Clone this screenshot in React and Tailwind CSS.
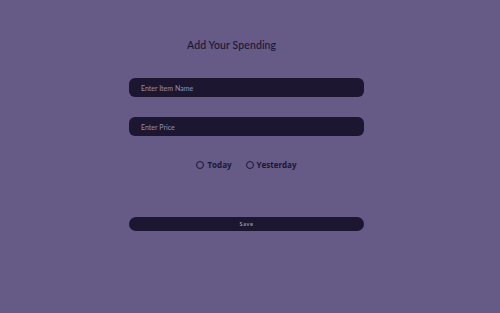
import { useState } from "react";

export default function App() {
  const [day, setDay] = useState(null);

  return (
    <div className="h-[313px] w-[500px] bg-[#655b86] font-['Lato',sans-serif] text-[#1b1633]">
      <div className="pl-[187px] pt-[38px]">
        <h1 className="text-[10.5px] font-medium leading-[14px] tracking-[0.1px]">Add Your Spending</h1>
      </div>
      <div className="ml-[129px] mt-[26px] flex w-[235px] flex-col">
        <input
          type="text"
          placeholder="Enter Item Name"
          className="h-[19px] w-full rounded-[6px] bg-[#1c1631] px-[12px] text-[7px] font-medium text-[#c9c4d8] outline-none placeholder:text-[#8f89a6]"
        />
        <input
          type="text"
          placeholder="Enter Price"
          className="mt-[20px] h-[19px] w-full rounded-[6px] bg-[#1c1631] px-[12px] text-[7px] font-medium text-[#c9c4d8] outline-none placeholder:text-[#8f89a6]"
        />
        <div className="mt-[23px] flex items-center justify-center gap-[14px] font-['Open_Sans',sans-serif] text-[8px] font-bold leading-[12px]">
          {["Today", "Yesterday"].map((label) => (
            <label key={label} className="flex cursor-pointer items-center gap-[3px]">
              <span
                onClick={() => setDay(label)}
                className={`h-[8px] w-[8px] rounded-full border border-[#1b1633] ${day === label ? "bg-[#1b1633]" : ""}`}
              />
              <span onClick={() => setDay(label)}>{label}</span>
            </label>
          ))}
        </div>
        <button
          type="button"
          className="mt-[46px] h-[14px] w-full rounded-full bg-[#1c1631] text-[5.5px] font-bold tracking-[0.6px] text-[#9a95ad]"
        >
          Save
        </button>
      </div>
    </div>
  );
}
